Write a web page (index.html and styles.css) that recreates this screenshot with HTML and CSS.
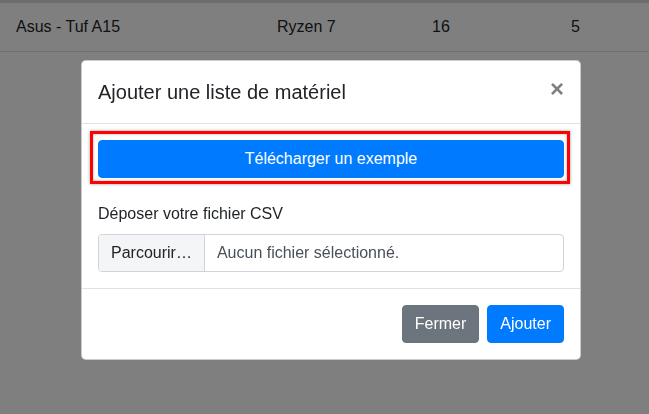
FILE: index.html
```html
<!DOCTYPE HTML>
<html>
<head>
<meta charset="utf-8">
<title>Matériel</title>
<link rel="stylesheet" href="styles.css">
</head>

<body>
<table class="list">
    <tbody>
        <tr>
            <td class="c-name">Asus - Tuf A15</td>
            <td class="c-cpu">Ryzen 7</td>
            <td class="c-ram">16</td>
            <td>5</td>
        </tr>
    </tbody>
</table>

<div class="backdrop"></div>

<div class="modal">
    <div class="modal-content">
        <div class="modal-header">
            <h5 class="modal-title">Ajouter une liste de matériel</h5>
            <button type="button" class="close">&times;</button>
        </div>
        <div class="modal-body">
            <div class="highlight">
                <a href="javascript:;" class="btn btn-primary btn-block">Télécharger un exemple</a>
            </div>
            <label class="field-label">Déposer votre fichier CSV</label>
            <div class="custom-file">
                <span class="file-browse">Parcourir…</span>
                <span class="file-name">Aucun fichier sélectionné.</span>
            </div>
        </div>
        <div class="modal-footer">
            <button type="button" class="btn btn-secondary">Fermer</button>
            <button type="button" class="btn btn-primary">Ajouter</button>
        </div>
    </div>
</div>
</body>
</html>
```

FILE: styles.css
```css
* {margin:0; padding:0; box-sizing:border-box;}
body {font-family:"Liberation Sans", Arial, sans-serif; font-size:16px; line-height:1.5; color:#212529; background:#fff;}

/* page behind the modal */
.list {width:100%; border-collapse:collapse; border-top:3px solid #d8dadd;}
.list td {padding:12px 0; border-bottom:1px solid #dee2e6; vertical-align:top;}
.list td:first-child {padding-left:16px;}
.c-name {width:277px;}
.c-cpu {width:155px;}
.c-ram {width:139px;}

.backdrop {position:fixed; inset:0; background:rgba(0,0,0,.5); z-index:10;}

.modal {position:fixed; inset:0; z-index:20; padding:60px 0 0 81px;}
.modal-content {width:500px; background:#fff; border:1px solid rgba(0,0,0,.2); border-radius:5px; display:flex; flex-direction:column;}

.modal-header {display:flex; justify-content:space-between; align-items:flex-start; padding:16px; border-bottom:1px solid #dee2e6;}
.modal-title {font-size:20px; font-weight:400; line-height:30px;}
.close {background:none; border:0; font-family:inherit; font-size:24px; font-weight:700; line-height:1; color:#000; opacity:.5; padding:0;}

.modal-body {padding:16px;}
.highlight {position:relative; margin-bottom:24px;}
.highlight::after {content:""; position:absolute; top:-9px; left:-8px; right:-6px; bottom:-6px; border:3px solid #f00; box-shadow:0 0 3px rgba(0,0,0,.4), inset 0 0 3px rgba(0,0,0,.3);}

.btn {display:inline-block; font-family:inherit; font-size:16px; line-height:24px; padding:6px 12px; border:1px solid transparent; border-radius:4px; color:#fff; text-align:center; text-decoration:none;}
.btn-block {display:block; width:100%;}
.btn-primary {background:#007bff; border-color:#007bff;}
.btn-secondary {background:#6c757d; border-color:#6c757d;}

.field-label {display:block; margin-bottom:8px;}

.custom-file {display:flex; height:38px; border:1px solid #ced4da; border-radius:4px; overflow:hidden;}
.file-browse {padding:6px 12px; background:#f4f5f7; border-right:1px solid #ced4da; color:#212529;}
.file-name {padding:6px 12px; color:#495057;}

.modal-footer {display:flex; justify-content:flex-end; gap:8px; padding:16px; border-top:1px solid #dee2e6;}
```
